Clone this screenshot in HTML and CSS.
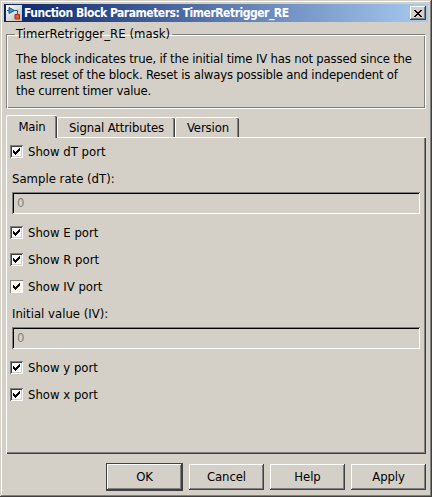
FILE: index.html
```html
<!DOCTYPE html>
<html lang="en">
<head>
<meta charset="utf-8">
<title>Function Block Parameters: TimerRetrigger_RE</title>
<link rel="stylesheet" href="styles.css">
</head>
<body>
<svg width="0" height="0" class="defs"><symbol id="tick" viewBox="0 0 7 7"><path d="M0 2h1v1h1v1h1v-1h1v-1h1v-1h1v-1h1v3h-1v1h-1v1h-1v1h-1v1h-1v-1h-1v-1h-1z"/></symbol></svg>
<main class="window">
  <header class="titlebar">
    <svg class="app-icon" width="16" height="16" viewBox="0 0 16 16"><defs><linearGradient id="ig" x2="1" y2="1"><stop stop-color="#fff"/><stop offset="1" stop-color="#b8b8b6"/></linearGradient></defs><path fill="url(#ig)" d="M0 0h16v16H0z"/><path d="M1 5.5h10.5v4" fill="none" stroke="#315a78"/><path d="M3 2.5l5.500 3-5.500 3z" fill="#319bd0" stroke="#1d5680"/><path d="M9 9.500h4.500v4.500h-4.500z" fill="#e65b2b" stroke="#a92e16"/></svg>
    <h1>Function Block Parameters: TimerRetrigger_RE</h1>
    <button class="close" aria-label="Close"><svg width="8" height="7" viewBox="0 0 8 7"><path d="M0 0h2v1h1v1h2v-1h1v-1h2v1h-1v1h-1v1h-1v1h1v1h1v1h1v1h-2v-1h-1v-1h-2v1h-1v1h-2v-1h1v-1h1v-1h1v-1h-1v-1h-1v-1h-1z"/></svg></button>
  </header>
  <fieldset class="group">
    <legend>TimerRetrigger_RE (mask)</legend>
    <p>The block indicates true, if the initial time IV has not passed since the<br>last reset of the block. Reset is always possible and independent of<br>the current timer value.</p>
  </fieldset>
  <nav class="tabs"><button class="tab active">Main</button><button class="tab signal">Signal Attributes</button><button class="tab version">Version</button></nav>
  <section class="panel">
    <div class="row"><span class="check"><svg width="7" height="7"><use href="#tick"/></svg></span>Show dT port</div>
    <div class="row">Sample rate (dT):</div>
    <div class="field">0</div>
    <div class="row"><span class="check"><svg width="7" height="7"><use href="#tick"/></svg></span>Show E port</div>
    <div class="row"><span class="check"><svg width="7" height="7"><use href="#tick"/></svg></span>Show R port</div>
    <div class="row"><span class="check warm"><svg width="7" height="7"><use href="#tick"/></svg></span>Show IV port</div>
    <div class="row">Initial value (IV):</div>
    <div class="field">0</div>
    <div class="row"><span class="check"><svg width="7" height="7"><use href="#tick"/></svg></span>Show y port</div>
    <div class="row"><span class="check"><svg width="7" height="7"><use href="#tick"/></svg></span>Show x port</div>
  </section>
  <footer class="actions"><button class="btn ok">OK</button><button class="btn">Cancel</button><button class="btn">Help</button><button class="btn">Apply</button></footer>
</main>
</body>
</html>
```
FILE: styles.css
```css
* { box-sizing: border-box; }
body { margin: 0; background: #d4d0c8; font: 13px/16px "DejaVu Sans Condensed", "DejaVu Sans", sans-serif; font-stretch: condensed; color: #000; }
.defs { position: absolute; }
.window { width: 432px; height: 497px; padding: 4px 6px 0 6px; display: flex; flex-direction: column; box-shadow: inset -1px -1px #404040, inset 1px 1px #d4d0c8, inset -2px -2px #808080, inset 2px 2px #fff; }
button { font: inherit; color: inherit; padding: 0; border: 0; border-radius: 0; background: #d4d0c8; }
.titlebar { flex: none; height: 18px; margin: 0 -2px; padding: 0 2px 0 2px; display: flex; align-items: center; background: linear-gradient(90deg, #0a246a, #a6caf0); color: #fff; }
.app-icon { flex: none; }
h1 { margin: 0 auto 0 2px; font-size: 12px; line-height: 18px; font-weight: bold; letter-spacing: -.47px; white-space: nowrap; }
.close { width: 16px; height: 14px; display: flex; justify-content: center; align-items: center; box-shadow: inset -1px -1px #404040, inset 1px 1px #fff, inset -2px -2px #808080; }
.group { height: 83px; margin: 4px 0 0; padding: 0 9px; border: solid; border-color: #808080 #fff #fff #808080; border-width: 1px; box-shadow: inset 1px 1px #fff, inset -1px -1px #808080; min-width: 0; }
legend { padding: 0 2px 0 1px; margin-left: -1px; line-height: 16px; letter-spacing: .04px; }
.group p { margin: 9px 0 0; white-space: nowrap; letter-spacing: -.18px; }
.tabs { height: 23px; margin-top: 5px; display: flex; align-items: flex-end; }
.tab { height: 20px; border: solid #fff; border-width: 1px 0 0 1px; border-radius: 2px 2px 0 0; box-shadow: inset -1px 0 #404040, inset -2px 0 #808080; }
.active { width: 51px; height: 23px; margin-bottom: -1px; padding-bottom: 0; z-index: 1; letter-spacing: -.2px; }
.signal { width: 118px; letter-spacing: -.15px; }
.version { width: 64px; padding-left: 1px; letter-spacing: -.1px; }
.panel { height: 317px; padding: 0 5px; border: solid #fff; border-width: 1px 0 0 1px; box-shadow: inset -1px -1px #404040, inset -2px -2px #808080; }
.row { height: 27px; display: flex; align-items: center; white-space: nowrap; }
.check { width: 13px; height: 13px; margin: 0 5px 0 -2px; display: grid; place-content: center; background: #fff; box-shadow: inset 1px 1px #808080, inset -1px -1px #fff, inset 2px 2px #404040, inset -2px -2px #d4d0c8; }
.check svg { display: block; }
.warm { background: #fff5e0; box-shadow: inset 1px 1px #808080, inset -1px -1px #fff; }
.field { height: 22px; width: 408px; margin: 0 0 5px; padding: 3px 5px; color: #808080; box-shadow: inset 1px 1px #808080, inset -1px -1px #fff, inset 2px 2px #000; }
.actions { margin-top: 9px; display: flex; justify-content: flex-end; gap: 6px; align-items: center; }
.btn { width: 75px; height: 26px; letter-spacing: -.1px; box-shadow: inset -1px -1px #404040, inset 1px 1px #fff, inset -2px -2px #808080; }
.ok { width: 77px; height: 28px; border: 1px solid #404040; }
```
